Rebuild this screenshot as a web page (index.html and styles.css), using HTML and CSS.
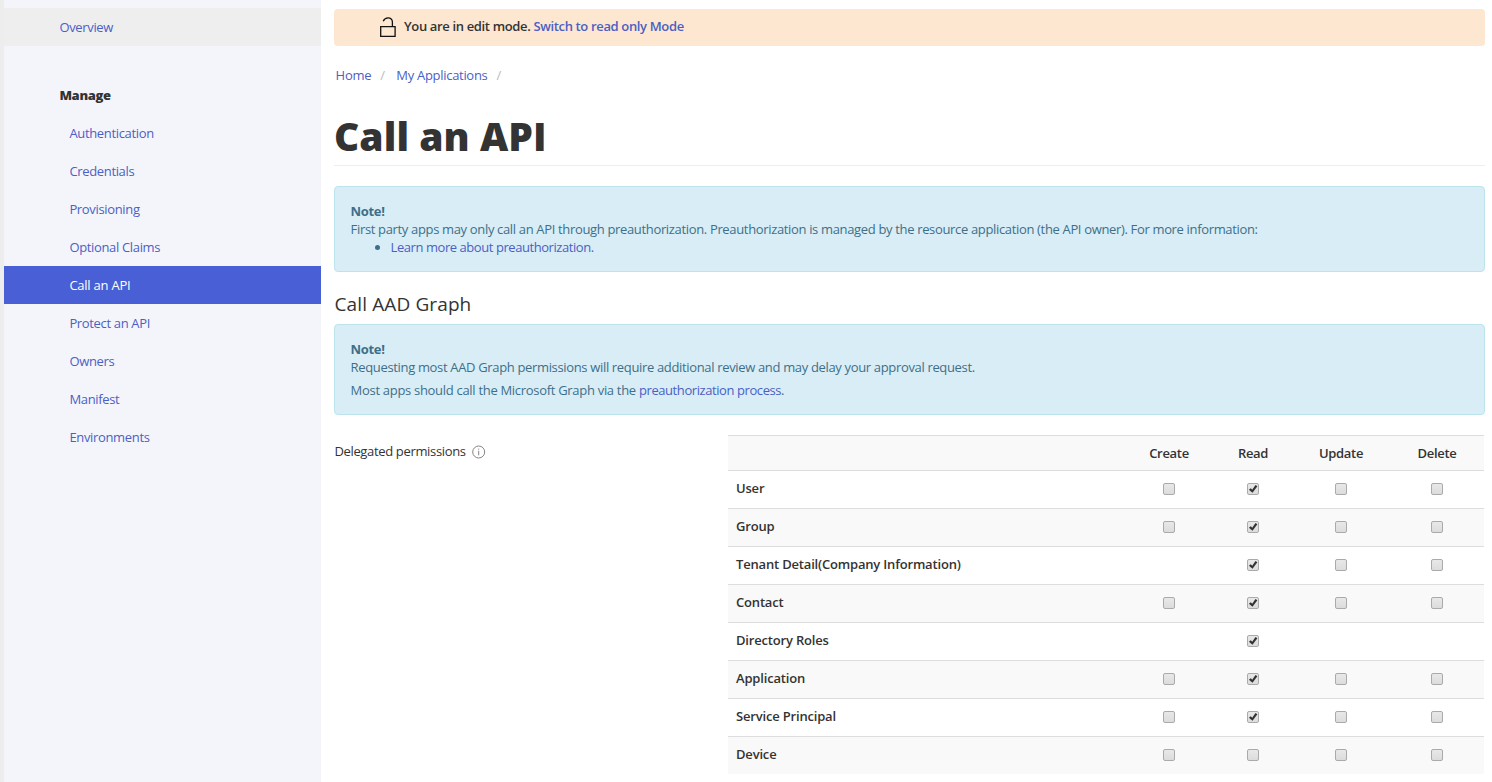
FILE: index.html
```
<!DOCTYPE html>
<html lang="en">
<head>
<meta charset="utf-8">
<title>Call an API</title>
<link rel="stylesheet" href="styles.css">
</head>
<body>
<div class="page">
  <nav class="sidebar">
    <a class="nav-item overview">Overview</a>
    <h2 class="nav-heading">Manage</h2>
    <a class="nav-item">Authentication</a>
    <a class="nav-item">Credentials</a>
    <a class="nav-item">Provisioning</a>
    <a class="nav-item">Optional Claims</a>
    <a class="nav-item active">Call an API</a>
    <a class="nav-item">Protect an API</a>
    <a class="nav-item">Owners</a>
    <a class="nav-item">Manifest</a>
    <a class="nav-item">Environments</a>
  </nav>
  <main class="content">
    <div class="banner">
      <svg class="lock" width="16" height="21" viewBox="0 0 16 21" fill="none" stroke="#111" stroke-width="1.3"><path d="M.7 9.600h14.400v9.800H.7zM12.400 9.600V5C12.400 2.300 10.600.9 8.100.9 5.700.9 4.200 2.100 3.200 4.200"/></svg>
      <span>You are in edit mode. <a>Switch to read only Mode</a></span>
    </div>
    <div class="crumbs"><a>Home</a><i>/</i><a>My Applications</a><i>/</i></div>
    <h1>Call an API</h1>
    <section class="note">
      <strong>Note!</strong>
      <p>First party apps may only call an API through preauthorization. Preauthorization is managed by the resource application (the API owner). For more information:</p>
      <ul><li><a>Learn more about preauthorization.</a></li></ul>
    </section>
    <h3>Call AAD Graph</h3>
    <section class="note graph">
      <strong>Note!</strong>
      <p>Requesting most AAD Graph permissions will require additional review and may delay your approval request.</p>
      <p class="process">Most apps should call the Microsoft Graph via the <a>preauthorization process</a>.</p>
    </section>
    <div class="permissions">
      <div class="perm-label"><span>Delegated permissions</span>
        <svg width="14" height="14" viewBox="0 0 14 14" fill="none" stroke="#858585"><circle cx="6.700" cy="7" r="6"/><path d="M6.700 5.800v4.500M6.700 3.600v1.100"/></svg>
      </div>
      <div class="table" id="table">
        <div class="row head"><b></b><b>Create</b><b>Read</b><b>Update</b><b>Delete</b></div>
      </div>
    </div>
  </main>
</div>
<script src="script.js"></script>
</body>
</html>
```
FILE: script.js
```
// One character per column: "-" no option, "0" clear, "1" checked.
const rows = [
  ["User", "0100"], ["Group", "0100"], ["Tenant Detail(Company Information)", "-100"],
  ["Contact", "0100"], ["Directory Roles", "-1--"], ["Application", "0100"],
  ["Service Principal", "0100"], ["Device", "0000"]
];
const check = '<svg width="12" height="12" viewBox="0 0 12 12"><path d="M1.900 6.700l1.900-1.500 1.400 1.500L8.500 2l1.900 1.300-4.900 6.500z" fill="#333"/></svg>';
document.getElementById("table").insertAdjacentHTML("beforeend", rows.map(([name, cells]) =>
  `<div class="row"><b>${name}</b>${[...cells].map(c =>
    `<span>${c === "-" ? "" : `<i class="box">${c === "1" ? check : ""}</i>`}</span>`).join("")}</div>`).join(""));
```
FILE: styles.css
```
* { box-sizing: border-box; }
body { margin: 0; font: 13px/18px "Open Sans", "Noto Sans", sans-serif; letter-spacing: -.34px; color: #333; background: #fff; }
a { color: #4b5fc4; }
h1, h2, h3, p, ul { margin: 0; }
.page { display: flex; height: 782px; overflow: hidden; }
.sidebar { width: 321px; flex: none; padding-top: 8px; background: #f4f5fa; border-left: 4px solid #ededed; display: flex; flex-direction: column; }
.nav-item { height: 38px; padding: 10px 0 0 65.4px; }
.nav-item.overview { background: #eee; padding-left: 55.4px; margin-bottom: 30px; }
.nav-heading { height: 38px; padding: 10px 0 0 55.4px; font-size: 13px; line-height: 18px; font-weight: 800; }
.nav-item.active { background: #485fd5; color: #fff; letter-spacing: -.24px; }
.content { width: 1164px; padding: 9px 0 0 13px; }
.banner { height: 37px; display: flex; align-items: flex-start; padding: 8px 0 0 45.600px; gap: 8.400px; border-radius: 4px; background: #fde7d1; font-weight: 600; letter-spacing: -.35px; }
.lock { display: block; }
.crumbs { display: flex; padding: 20px 0 0 1.600px; letter-spacing: -.3px; }
.crumbs i { font-style: normal; color: #bbb; width: 25.200px; padding-left: 9px; }
h1 { margin-top: 26px; height: 56px; border-bottom: 1px solid #eee; font-size: 39px; line-height: 51px; font-weight: 800; letter-spacing: .06px; }
.note { margin-top: 20px; height: 86px; padding: 15px 15.600px; border: 1px solid #bce4ec; border-radius: 4px; background: #d9edf7; color: #3d7088; }
.note strong { display: block; }
.note ul { padding-left: 40px; letter-spacing: -.44px; }
h3 { margin-top: 19px; height: 26px; padding-left: .5px; font-size: 19px; line-height: 26px; font-weight: 400; letter-spacing: .12px; }
.note.graph { margin-top: 7px; height: 91px; }
.process { margin-top: 5px; letter-spacing: -.3px; }
.process a { letter-spacing: -.42px; }
.permissions { display: flex; margin-top: 20px; }
.perm-label { width: 394px; display: flex; align-items: flex-start; gap: 6px; padding: 7px 0 0 .4px; }
.perm-label svg { margin-top: 3px; }
.table { width: 756px; }
.row { height: 38px; display: grid; grid-template-columns: 399px 84px 84px 92px 97px; border-top: 1px solid #ddd; letter-spacing: -.18px; }
.row b { font-weight: 600; }
.row.head b { letter-spacing: -.3px; }
.row:nth-child(odd) { background: #f9f9f9; }
.row > * { display: flex; justify-content: center; align-items: flex-start; padding-top: 8px; }
.row > :first-child { justify-content: flex-start; padding-left: 8px; }
.row > :last-child { padding-left: 3px; }
.row.head { height: 35px; }
.row > span { padding-top: 12px; }
.box { width: 12px; height: 12px; border: 1px solid #aaa; border-radius: 2px; background: linear-gradient(#e8e8e8, #dcdcdc); }
.box svg { display: block; margin: -1px; }
```
